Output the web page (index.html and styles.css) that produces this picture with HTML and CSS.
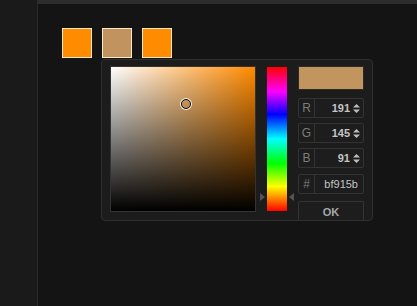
FILE: index.html
```html
<!doctype html>
<html lang="en">
  <head>
    <meta charset="utf-8" />
    <title>Color Picker</title>
    <link rel="stylesheet" href="styles.css">
  </head>
  <body>
    <div class="app">
      <div class="sidebar"></div>
      <div class="main">
        <div class="topbar"></div>
        <div class="content">
          <div class="swatches">
            <div class="swatch orange"></div>
            <div class="swatch tan"></div>
            <div class="swatch orange"></div>
          </div>

          <div class="picker">
            <div class="sv">
              <div class="sv-grad"></div>
              <div class="sv-handle" style="left:75px;top:37px"></div>
            </div>

            <div class="hue">
              <div class="hue-bar"></div>
              <span class="arrow arrow-l" style="top:130px"></span>
              <span class="arrow arrow-r" style="top:130px"></span>
            </div>

            <div class="side">
              <div class="preview"></div>
              <div class="field">
                <span class="lbl">R</span>
                <span class="val">191</span>
                <svg class="spin" width="7" height="9" viewBox="0 0 7 9"><path d="M0 3.5 L3.5 0 L7 3.5 Z M0 5.5 L7 5.5 L3.5 9 Z" fill="#bdbdbd"/></svg>
              </div>
              <div class="field">
                <span class="lbl">G</span>
                <span class="val">145</span>
                <svg class="spin" width="7" height="9" viewBox="0 0 7 9"><path d="M0 3.5 L3.5 0 L7 3.5 Z M0 5.5 L7 5.5 L3.5 9 Z" fill="#bdbdbd"/></svg>
              </div>
              <div class="field">
                <span class="lbl">B</span>
                <span class="val">91</span>
                <svg class="spin" width="7" height="9" viewBox="0 0 7 9"><path d="M0 3.5 L3.5 0 L7 3.5 Z M0 5.5 L7 5.5 L3.5 9 Z" fill="#bdbdbd"/></svg>
              </div>
              <div class="field hexrow">
                <span class="lbl">#</span>
                <span class="val hex">bf915b</span>
              </div>
              <button class="ok">OK</button>
            </div>
          </div>
        </div>
      </div>
    </div>
  </body>
</html>
```

FILE: styles.css
```css
*{ box-sizing:border-box; }
body{ margin:0; background:#141414; font-family:"Liberation Sans", Arial, sans-serif; }
.app{ display:flex; height:306px; }
.sidebar{ width:38px; background:#1a1a1a; border-right:1px solid #2a2a2a; }
.main{ flex:1; }
.topbar{ height:4px; background:#2d2d2d; }
.content{ padding:24px 0 0 24px; }

.swatches{ display:flex; gap:10px; }
.swatch{ width:30px; height:30px; border:1px solid #fde8c6; }
.orange{ background:#ff8b00; }
.tan{ background:#c1945f; }

.picker{ display:flex; margin:1px 0 0 39px; width:272px; height:162px; background:#1c1c1c; border:1px solid #2f2f2f; border-radius:4px; padding:6px 0 0 8px; }

.sv{ position:relative; width:146px; height:146px; border:1px solid #333; }
.sv-grad{ width:100%; height:100%; background:linear-gradient(to top, #000, rgba(0,0,0,0)), linear-gradient(to right, #fff, #ff8a00); }
.sv-handle{ position:absolute; width:10px; height:10px; margin:-5px 0 0 -5px; border-radius:50%; border:1.5px solid #111; box-shadow:0 0 0 1px rgba(255,255,255,.85); }

.hue{ position:relative; margin:1px 0 0 11px; width:20px; height:144px; }
.hue-bar{ height:100%; background:linear-gradient(to bottom, #f00 0%, #f0f 17%, #00f 33%, #0ff 50%, #0f0 67%, #ff0 83%, #f00 100%); }
.arrow{ position:absolute; width:0; height:0; border-top:4px solid transparent; border-bottom:4px solid transparent; margin-top:-4px; }
.arrow-l{ left:-7px; border-left:5px solid #555; }
.arrow-r{ right:-7px; border-right:5px solid #555; }

.side{ display:flex; flex-direction:column; gap:5px; margin-left:11px; width:66px; }
.preview{ height:24px; background:#c2955f; border:1px solid #2a2a2a; margin-bottom:2px; }
.field{ display:flex; align-items:center; height:20px; border:1px solid #333; border-radius:2px; background:#1d1d1d; margin-top:1px; }
.field + .field{ margin-top:0; }
.hexrow{ margin-top:1px !important; }
.lbl{ width:16px; height:100%; border-right:1px solid #333; display:flex; align-items:center; justify-content:center; color:#7c7c7c; font-size:12px; }
.val{ flex:1; text-align:right; color:#c4c4c4; font-size:11px; font-weight:bold; padding-right:3px; }
.val.hex{ font-weight:normal; padding-right:5px; }
.spin{ margin-right:3px; }
.ok{ margin-top:2px; height:19px; border:1px solid #333; border-bottom:0; border-radius:2px 2px 0 0; background:#1d1d1d; color:#a8a8a8; font-family:inherit; font-size:11px; font-weight:bold; padding:2px 0 0; }
```
